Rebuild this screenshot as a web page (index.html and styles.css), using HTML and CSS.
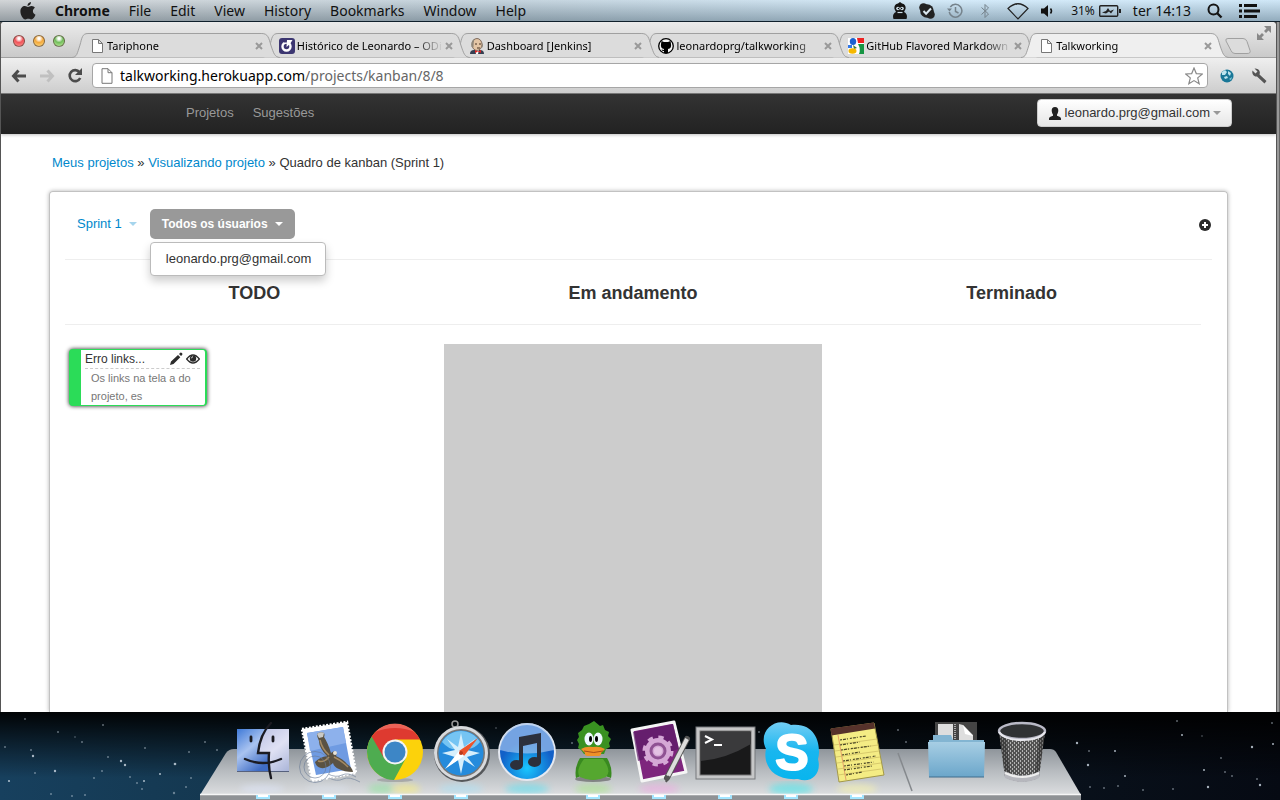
FILE: index.html
```html
<!DOCTYPE html>
<html lang="pt-BR">
<head>
<meta charset="utf-8">
<title>Talkworking</title>
<link rel="stylesheet" href="styles.css">
</head>
<body>
<header class="menubar">
  <nav class="menus">
    <button class="apple" aria-label="Apple"><svg width="16" height="18" viewBox="0 0 16 18"><path fill="#222" d="M11 0c.1 2-1.500 3.900-3.500 3.900C7.300 2 9 .2 11 0zM8 5c.8 0 1.800-1 3.600-1 1.500 0 2.600.8 3.300 1.800-2.900 1.700-2.500 5.700.6 6.900C14.700 15 13 17.500 11.300 17.500c-1.200 0-1.600-.7-3-.7s-1.900.7-3 .7C3 17.500.4 13.200.4 9.600.4 6 2.600 4.100 4.900 4.100 6.300 4.100 7.300 5 8 5z"/></svg></button>
    <button class="app">Chrome</button><button>File</button><button>Edit</button><button>View</button><button>History</button><button>Bookmarks</button><button>Window</button><button>Help</button>
  </nav>
  <div class="status">
    <svg width="14" height="18" viewBox="0 0 14 18"><path fill="#151515" d="M7 0l2 1.500c3 .5 4 3 3.500 5.500L11 10c3 1.500 3.500 4 2.500 7H.5C-.5 14 0 11.500 3 10L1.500 7C1 4.500 2 2 5 1.500z"/><circle cx="5" cy="6.500" r="1.800" fill="#cfe0ea"/><circle cx="9" cy="6.500" r="1.800" fill="#cfe0ea"/><circle cx="5.400" cy="6.500" r=".7"/><circle cx="8.600" cy="6.500" r=".7"/><path d="M4.500 10.500h5" stroke="#cfe0ea" stroke-width="1.200"/></svg>
    <svg width="16" height="16" viewBox="0 0 16 16"><g fill="#222"><circle cx="8" cy="8" r="6.800"/><circle cx="4.500" cy="4.500" r="4.300"/><circle cx="11.500" cy="11.500" r="4.300"/></g><path d="M4.500 8l2.600 2.800L12 5.500" fill="none" stroke="#dbe8f0" stroke-width="2"/></svg>
    <svg width="16" height="16" viewBox="0 0 16 16" fill="none" stroke="#75828b" stroke-width="1.500"><path d="M2.200 9A6.400 6.400 0 1 0 3.300 4"/><path d="M8.500 4v4.500l3 1.500"/><path d="M0 5.500l2.500 3 2.500-3z" fill="#75828b" stroke="none"/></svg>
    <svg width="20" height="16" viewBox="0 0 20 16" fill="none" stroke="#75828b"><path d="M6.500 4.500l7 6.500-3.500 3.500v-13L13.500 5l-7 6.500"/></svg>
    <svg width="22" height="18" viewBox="0 0 22 18" fill="none" stroke="#222" stroke-width="1.200"><path d="M1 6.500Q11-3 21 6.500L11 17z"/></svg>
    <svg width="18" height="14" viewBox="0 0 18 14"><path fill="#111" d="M0 4.500h3L7 1v12L3 9.500H0z"/><path d="M9.500 4.500q2 2.500 0 5" fill="none" stroke="#111" stroke-width="1.500"/></svg>
    <span class="battery"><span>31%</span><svg width="22" height="12" viewBox="0 0 22 12"><rect x=".7" y=".7" width="18" height="10.600" rx="1" fill="none" stroke="#222" stroke-width="1.400"/><path d="M20 4h2v4h-2z" fill="#222"/><path d="M3 7.500l4-1.500 2-3 2 3 4-1.500-3 4-2-2-3 2z" fill="#222"/></svg></span>
    <span class="clock">ter 14:13</span>
    <svg width="24" height="16" viewBox="0 0 24 16" fill="none" stroke="#151515"><circle cx="10.500" cy="6.500" r="5" stroke-width="2"/><path d="M14 10l4.500 4.500" stroke-width="2.400"/></svg>
    <svg width="21" height="14" viewBox="0 0 21 14" fill="#111"><path d="M0 0h3v3H0zM0 5.500h3v3H0zM0 11h3v3H0zM5 0h13v3H5zM5 5.500h16v3H5zM5 11h13v3H5z"/></svg>
  </div>
</header>

<main class="stage">
<section class="window">
  <div class="tabbar">
    <div class="lights"><button class="light red" aria-label="Close"></button><button class="light amber" aria-label="Minimise"></button><button class="light green" aria-label="Zoom"></button></div>
    <div class="tabs">
      <div class="tab t1"><svg class="shape" viewBox="0 0 208 25" preserveAspectRatio="none"><path d="M0 24.500C5 24 5 21 8 12C10 5 10 .5 16 .5H190C196 .5 197 5 199 12C202 21 203 24 208 24.500"/></svg><button class="title"><svg width="16" height="16" viewBox="0 0 16 16"><path d="M3.500 1.500h6l4 4v9h-10zM9.500 1.500v4h4" fill="#fff" stroke="#777"/></svg><span>Tariphone</span></button><button class="close" aria-label="Close tab"><svg width="8" height="8" viewBox="0 0 8 8"><path d="M1 1l6 6M7 1L1 7"/></svg></button></div>
      <div class="tab t2"><svg class="shape" viewBox="0 0 208 25" preserveAspectRatio="none"><path d="M0 24.500C5 24 5 21 8 12C10 5 10 .5 16 .5H190C196 .5 197 5 199 12C202 21 203 24 208 24.500"/></svg><button class="title"><svg width="16" height="16" viewBox="0 0 16 16"><rect width="16" height="16" rx="3" fill="#3c3671"/><circle cx="7.500" cy="8.500" r="4" fill="none" stroke="#fff" stroke-width="2.400"/><path d="M5 1.500h4v3H5z" fill="#3c3671"/><path d="M8 2h5.500L11 6 7.500 9z" fill="#fff"/></svg><span>Histórico de Leonardo – ODi</span></button><button class="close" aria-label="Close tab"><svg width="8" height="8" viewBox="0 0 8 8"><path d="M1 1l6 6M7 1L1 7"/></svg></button></div>
      <div class="tab t3"><svg class="shape" viewBox="0 0 208 25" preserveAspectRatio="none"><path d="M0 24.500C5 24 5 21 8 12C10 5 10 .5 16 .5H190C196 .5 197 5 199 12C202 21 203 24 208 24.500"/></svg><button class="title"><svg width="16" height="16" viewBox="0 0 16 16"><path fill="#354052" d="M1 16q0-4 4-4h6q4 0 4 4z"/><path d="M6 12h4l-1 4H7z" fill="#fff"/><ellipse cx="8" cy="6.500" rx="5" ry="6" fill="#e3c5a5" stroke="#665143" stroke-width=".8"/><path d="M2.500 9q-1-6 3-8.500-1 4-1 8.500M13 5q2 2 0 5" fill="#8f877a"/><path d="M6 6h2M10 6h2M8 10h3" stroke="#493323"/><path d="M8 13l-2-1v3l6-3v3z" fill="#d22"/></svg><span>Dashboard [Jenkins]</span></button><button class="close" aria-label="Close tab"><svg width="8" height="8" viewBox="0 0 8 8"><path d="M1 1l6 6M7 1L1 7"/></svg></button></div>
      <div class="tab t4"><svg class="shape" viewBox="0 0 208 25" preserveAspectRatio="none"><path d="M0 24.500C5 24 5 21 8 12C10 5 10 .5 16 .5H190C196 .5 197 5 199 12C202 21 203 24 208 24.500"/></svg><button class="title"><svg width="16" height="16" viewBox="0 0 16 16"><circle cx="8" cy="8" r="7.300" fill="#f4f4f4" stroke="#000" stroke-width="1.300"/><path d="M3.500 3l2.500 1h4l2.500-1 .5 3c.5 3-.5 4.500-3 5v4H6v-2c-1.500 0-2-.5-2.500-1.500L6 12v-1c-2.500-.5-3.500-2-3-5z"/></svg><span>leonardoprg/talkworking</span></button><button class="close" aria-label="Close tab"><svg width="8" height="8" viewBox="0 0 8 8"><path d="M1 1l6 6M7 1L1 7"/></svg></button></div>
      <div class="tab t5"><svg class="shape" viewBox="0 0 208 25" preserveAspectRatio="none"><path d="M0 24.500C5 24 5 21 8 12C10 5 10 .5 16 .5H190C196 .5 197 5 199 12C202 21 203 24 208 24.500"/></svg><button class="title"><svg width="16" height="16" viewBox="0 0 16 16"><rect width="16" height="16" fill="#fff"/><path d="M9 0h7v5h-6z" fill="#e22"/><path d="M10 6h6v10h-5q2-5-1-10z" fill="#169543"/><path d="M0 7h4v3H0z" fill="#3279e8"/><ellipse cx="5" cy="3.500" rx="3.200" ry="3.500" fill="#1c61cf"/><path d="M5 7l4 3-3 1z" fill="#3b7c3c"/><ellipse cx="4.500" cy="13" rx="4" ry="2.800" fill="#f5b800"/></svg><span>GitHub Flavored Markdown</span></button><button class="close" aria-label="Close tab"><svg width="8" height="8" viewBox="0 0 8 8"><path d="M1 1l6 6M7 1L1 7"/></svg></button></div>
      <div class="tab active"><svg class="shape" viewBox="0 0 208 25" preserveAspectRatio="none"><path d="M0 24.500C5 24 5 21 8 12C10 5 10 .5 16 .5H190C196 .5 197 5 199 12C202 21 203 24 208 24.500"/></svg><button class="title"><svg width="16" height="16" viewBox="0 0 16 16"><path d="M3.500 1.500h6l4 4v9h-10zM9.500 1.500v4h4" fill="#fff" stroke="#777"/></svg><span>Talkworking</span></button><button class="close" aria-label="Close tab"><svg width="8" height="8" viewBox="0 0 8 8"><path d="M1 1l6 6M7 1L1 7"/></svg></button></div>
    </div>
    <button class="newtab" aria-label="New tab"><svg width="26" height="16" viewBox="0 0 26 16"><path d="M3 .5h15q3 0 4 3l3 9q1 3-3 3H10q-3 0-4-3L1 3Q0 .5 3 .5z" fill="#dcdcdc" stroke="#a0a0a0"/></svg></button>
    <button class="expand" aria-label="Full screen"><svg width="14" height="14" viewBox="0 0 14 14" fill="#888"><path d="M7 0h7v7l-2.500-2.500L9 7 7 5l2.500-2.500zM0 7l2.500 2.500L5 7l2 2-2.500 2.500L7 14H0z"/></svg></button>
  </div>
  <div class="toolbar">
    <button aria-label="Back"><svg width="16" height="14" viewBox="0 0 16 14"><path d="M7.500 1.500L2.500 7l5 5.500M3 7h12" fill="none" stroke="#4c4c4c" stroke-width="3"/></svg></button>
    <button aria-label="Forward"><svg width="16" height="14" viewBox="0 0 16 14"><path d="M8.500 1.500l5 5.500-5 5.500M13 7H1" fill="none" stroke="#c0c0c0" stroke-width="3"/></svg></button>
    <button aria-label="Reload"><svg width="16" height="16" viewBox="0 0 16 16"><path d="M12.500 4.200A5.500 5.500 0 1 0 13.200 10" fill="none" stroke="#4c4c4c" stroke-width="2.600"/><path d="M15 0v7H8z" fill="#4c4c4c"/></svg></button>
    <div class="omnibox">
      <svg width="12" height="16" viewBox="0 0 12 16"><path d="M1 .7h6l4 4v10.600H1zM7 .7v4h4" fill="#fff" stroke="#777"/></svg>
      <label class="url"><b>talkworking.herokuapp.com</b><span>/projects/kanban/8/8</span><input type="text" aria-label="Address"></label>
      <button aria-label="Bookmark"><svg width="18" height="18" viewBox="0 0 18 18"><path d="M9 1l2.300 5.600 6 .4-4.600 3.900 1.500 5.900L9 13.600l-5.200 3.200 1.500-5.900L.7 7l6-.4z" fill="#fff" stroke="#8a8a8a" stroke-width="1.200"/></svg></button>
    </div>
    <button aria-label="Extension"><svg width="14" height="14" viewBox="0 0 14 14"><circle cx="7" cy="7" r="6.500" fill="#197797"/><path d="M2 3l3-2 2 2-2 3-3 0zM8 2l3 2-1 3-2-2zM4 8l3-1 1 2-3 1z" fill="#bde5ee"/><path d="M9 10l3-2-1 3z" fill="#7fc6d6"/></svg></button>
    <button aria-label="Settings"><svg width="16" height="16" viewBox="0 0 16 16"><path d="M1.500 2.500l3 3 2-2-3-3C7 0 10 3 8.500 6.500l7 6.500-2 2.500-7.500-7C3 9 .5 6 1.500 2.500z" fill="#555"/></svg></button>
  </div>

  <div class="page">
    <div class="navbar">
      <nav><a href="#">Projetos</a><a href="#">Sugestões</a></nav>
      <button class="account"><svg width="14" height="13" viewBox="0 0 14 13"><path fill="#222" d="M7 0c2.300 0 3.400 1.500 3.300 3.800C10.200 5.500 9.500 7 9 7.500v1.200c1.500.8 4 1 4 2.800V13H1v-1.500C1 9.700 3.500 9.500 5 8.700V7.500C4.500 7 3.800 5.500 3.700 3.800 3.600 1.500 4.700 0 7 0z"/></svg><span>leonardo.prg@gmail.com</span><i class="caret"></i></button>
    </div>
    <div class="container">
      <nav class="crumbs"><a href="#">Meus projetos</a> » <a href="#">Visualizando projeto</a> » Quadro de kanban (Sprint 1)</nav>
      <section class="panel">
        <div class="filters">
          <button class="sprint">Sprint 1<i class="caret"></i></button>
          <div class="dropdown">
            <button class="users">Todos os úsuarios<i class="caret"></i></button>
            <div class="menu"><a href="#">leonardo.prg@gmail.com</a></div>
          </div>
          <button class="add" aria-label="Adicionar"><svg width="12" height="12" viewBox="0 0 12 12"><circle cx="6" cy="6" r="6" fill="#2b2b2b"/><path d="M6 3v6M3 6h6" stroke="#fff" stroke-width="2"/></svg></button>
        </div>
        <div class="board">
          <div class="heads"><h3>TODO</h3><h3>Em andamento</h3><h3>Terminado</h3></div>
          <div class="columns">
            <div class="column">
              <article class="card">
                <header><h4>Erro links...</h4>
                  <button aria-label="Editar"><svg width="14" height="14" viewBox="0 0 14 14"><path d="M1 13l1-3.500L9 3l2.300 2.300L4.500 12zM10 2l1.300-1.300q.8-.4 1.600.4t.4 1.600L12 4z" fill="#2b2b2b"/></svg></button>
                  <button aria-label="Ver"><svg width="14" height="10" viewBox="0 0 14 10"><path d="M.7 5Q7-3 13.300 5 7 13 .7 5z" fill="#fff" stroke="#2b2b2b" stroke-width="1.400"/><circle cx="7" cy="4.600" r="3.200" fill="#2b2b2b"/><path d="M5.400 4.300q.3-1.500 1.600-1.600" fill="none" stroke="#fff" stroke-width=".8"/></svg></button>
                </header>
                <p>Os links na tela a do projeto, es</p>
              </article>
            </div>
            <div class="column over"></div>
            <div class="column"></div>
          </div>
        </div>
      </section>
    </div>
  </div>
</section>
</main>

<footer class="desktop">
  <svg class="stars" width="1280" height="88" viewBox="0 0 1280 88" fill="#cfdbe6"><g opacity=".8"><circle cx="1077" cy="31" r="1.200"/><circle cx="1088" cy="53" r="1.200"/><circle cx="1115" cy="39" r="1"/><circle cx="1125" cy="64" r="1"/><circle cx="1182" cy="23" r="1"/><circle cx="1204" cy="58" r="1"/><circle cx="1208" cy="75" r="1.200"/><circle cx="1252" cy="35" r="1.200"/><circle cx="1260" cy="73" r="1.200"/><circle cx="1273" cy="32" r="1"/><circle cx="175" cy="52" r="1.300"/><circle cx="121" cy="49" r="1.200"/><circle cx="125" cy="53" r="1.200"/><circle cx="33" cy="44" r="1.200"/><circle cx="55" cy="59" r="1.200"/><circle cx="9" cy="69" r="1.100"/><circle cx="144" cy="69" r="1"/><circle cx="160" cy="62" r="1"/></g><g opacity=".45"><circle cx="1089" cy="39" r="1"/><circle cx="1104" cy="76" r="1"/><circle cx="1143" cy="78" r="1"/><circle cx="1173" cy="77" r="1"/><circle cx="1177" cy="9" r="1"/><circle cx="1202" cy="24" r=".8"/><circle cx="1221" cy="46" r="1"/><circle cx="1225" cy="60" r="1"/><circle cx="1232" cy="64" r="1"/><circle cx="1257" cy="67" r="1"/><circle cx="1272" cy="11" r="1"/><circle cx="1090" cy="75" r="1"/><circle cx="1118" cy="74" r="1"/><circle cx="31" cy="38" r="1"/><circle cx="25" cy="7" r="1"/><circle cx="58" cy="20" r="1"/><circle cx="82" cy="30" r="1"/><circle cx="75" cy="25" r=".8"/><circle cx="103" cy="13" r="1"/><circle cx="145" cy="36" r="1"/><circle cx="108" cy="45" r="1"/><circle cx="102" cy="59" r="1"/><circle cx="94" cy="66" r="1"/><circle cx="35" cy="61" r="1"/><circle cx="51" cy="82" r="1"/><circle cx="85" cy="83" r="1"/><circle cx="72" cy="84" r="1"/><circle cx="142" cy="77" r="1"/><circle cx="174" cy="81" r="1.200"/><circle cx="186" cy="75" r="1"/><circle cx="191" cy="66" r="1"/><circle cx="5" cy="35" r="1"/><circle cx="130" cy="65" r="1"/><circle cx="137" cy="71" r="1"/><circle cx="189" cy="40" r="1"/><circle cx="205" cy="30" r="1"/><circle cx="217" cy="38" r="1"/><circle cx="572" cy="31" r="1"/><circle cx="759" cy="20" r="1"/><circle cx="898" cy="18" r="1"/><circle cx="906" cy="30" r="1"/><circle cx="496" cy="16" r=".8"/></g></svg>
  <nav class="dock">
    <svg class="shelf" width="882" height="52" viewBox="0 0 882 52">
      <defs><linearGradient id="sh" x2="0" y2="1"><stop offset="0" stop-color="#8f959b"/><stop offset=".5" stop-color="#b9bdc1"/><stop offset="1" stop-color="#dcdee0"/></linearGradient><filter id="bl"><feGaussianBlur stdDeviation="3"/></filter></defs>
      <path d="M34 1H850q4 0 6 3L881 47H0L26 5q3-4 8-4z" fill="url(#sh)"/>
      <g filter="url(#bl)" opacity=".5"><ellipse cx="62" cy="41" rx="22" ry="4" fill="#dfe8ff"/><ellipse cx="128" cy="41" rx="22" ry="4" fill="#dbe3ef"/><ellipse cx="182" cy="41" rx="14" ry="5" fill="#83e693"/><ellipse cx="206" cy="41" rx="14" ry="5" fill="#fff36c"/><ellipse cx="261" cy="41" rx="22" ry="5" fill="#a4e2fa"/><ellipse cx="327" cy="41" rx="22" ry="5" fill="#47e1f5"/><ellipse cx="393" cy="41" rx="18" ry="5" fill="#a0ea7a"/><ellipse cx="459" cy="41" rx="20" ry="5" fill="#f4a0e4"/><ellipse cx="591" cy="41" rx="22" ry="6" fill="#30eaf0"/><ellipse cx="657" cy="41" rx="20" ry="5" fill="#fff9a0"/></g>
      <path d="M0 47h881v5H0z" fill="#8f9295"/><path d="M0 46.500h881" stroke="#f6f6f6" stroke-width="1.500"/>
      <g stroke="#a2e5ff" stroke-width="4"><path d="M56 49h14M122 49h14M188 49h14M254 49h14M386 49h14M452 49h14M518 49h14M584 49h14M650 49h14"/></g><g stroke="#fff" stroke-width="2"><path d="M58 48h10M124 48h10M190 48h10M256 48h10M388 48h10M454 48h10M520 48h10M586 48h10M652 48h10"/></g>
    </svg>
    <button aria-label="Finder"><svg width="66" height="88" viewBox="0 0 66 88"><defs><linearGradient id="f1" x2=".6" y2="1"><stop stop-color="#3f7ad8"/><stop offset=".5" stop-color="#a9c3f0"/><stop offset="1" stop-color="#3f6cc4"/></linearGradient><linearGradient id="f2" x2="1" y2="1"><stop stop-color="#a9b2dc"/><stop offset=".6" stop-color="#dfe1f4"/><stop offset="1" stop-color="#a9b4d8"/></linearGradient></defs><rect x="7" y="17" width="52" height="43" fill="url(#f2)"/><path d="M7 17h31q-8 10-10 24h11q-1 10 0 19H7z" fill="url(#f1)"/><path d="M7 59.500h52" stroke="#56617d"/><g fill="none" stroke="#1b1b22" stroke-width="2.400" stroke-linecap="round"><path d="M41 11Q30 22 28 41h11q-1 14 2 25M15 47q18 8 36 0"/><path d="M21 25v4M43 25v4" stroke-width="2.800"/></g></svg></button>
    <button aria-label="Mail"><svg width="66" height="88" viewBox="0 0 66 88"><path d="M6 17l45-7 9 51-44 8z" fill="#fff" stroke="#fff" stroke-width="2.500" stroke-dasharray="2 1.500"/><path d="M11 21l36-6 8 42-35 6z" fill="#6f9be2"/><path d="M11 21l36-6 3 16-36 8z" fill="#8db1ec"/><path d="M21 22q3-3 7-1 1 2 0 4 4 6 7 16l3-2 3 2-1 3q7 3 11 8 5 3 6 8-9 0-14-3-5-2-6-6-6 6-12 5-5-1-6-6 5-5 12-6-8-8-8-15-2-4-2-7z" fill="#5a5243"/><path d="M24 28q2 9 9 15M38 45q8 4 14 10M22 49q6 2 11-4" stroke="#a58a62" stroke-width="1.500" fill="none"/><path d="M21 22q3-3 7-1l-1 4-4 1z" fill="#c9c9c6"/><circle cx="39" cy="41" r="2" fill="#e8e4da"/><g fill="none" stroke="#6a7b96" opacity=".6"><circle cx="19" cy="55" r="15.500"/><circle cx="19" cy="55" r="11"/><path d="M32 62q8 4 14 1t14 2M33 66q8 4 14 1t17 3"/></g></svg></button>
    <button aria-label="Chrome"><svg width="66" height="88" viewBox="0 0 66 88"><ellipse cx="33" cy="68" rx="18" ry="2" fill="#777" opacity=".4"/><circle cx="33" cy="40" r="28" fill="#fcd20b"/><path d="M9.700 24.500A28 28 0 0 0 32 68L44 46z" fill="#4eac50"/><path d="M33 27.500h25A28 28 0 0 0 9.700 24.500L22 46z" fill="#de3a30"/><path d="M13 20a28 28 0 0 1 40 0q-20-8-40 0z" fill="#f2746a" opacity=".7"/><circle cx="33" cy="40" r="12.500" fill="#f5f5f5"/><circle cx="33" cy="40" r="10.500" fill="#3d86c6"/></svg></button>
    <button aria-label="Safari"><svg width="66" height="88" viewBox="0 0 66 88"><circle cx="27" cy="12" r="3" fill="none" stroke="#999" stroke-width="1.500"/><circle cx="34" cy="42" r="28" fill="#55585b"/><circle cx="33" cy="41" r="27" fill="#d8dadd"/><circle cx="33" cy="41" r="24" fill="#777"/><circle cx="33" cy="41" r="22.500" fill="#258bdc"/><path d="M14 30a22 22 0 0 1 38 0q-8 10-17 5-10 7-21-5z" fill="#75c4f3"/><path d="M33 21l3 14 11-8-8 11 13 3-13 4 8 10-11-7-3 14-3-14-11 7 8-10-13-4 13-3-8-11 11 8z" fill="#d6effc"/><path d="M50 26L36 44l-5-5z" fill="#ec542b"/><path d="M17 57l14-18 5 5z" fill="#fff"/><circle cx="33" cy="41" r="2" fill="#bb381a"/></svg></button>
    <button aria-label="iTunes"><svg width="66" height="88" viewBox="0 0 66 88"><defs><radialGradient id="it" cy=".8"><stop stop-color="#19c7ff"/><stop offset="1" stop-color="#1260c8"/></radialGradient></defs><circle cx="33" cy="40" r="29" fill="#e5e9f1"/><circle cx="33" cy="40" r="27" fill="url(#it)"/><path d="M6 38a27 27 0 0 1 54 0q-27 7-54 0z" fill="#a9c8ef" opacity=".65"/><g fill="#2c303c"><path d="M25 25l22-4v29h-4V31l-14 3v19h-4z"/><ellipse cx="22.500" cy="53" rx="6.500" ry="5"/><ellipse cx="40.500" cy="50" rx="6.500" ry="5"/></g></svg></button>
    <button aria-label="Adium"><svg width="66" height="88" viewBox="0 0 66 88"><ellipse cx="33" cy="67" rx="18" ry="3" fill="#555" opacity=".6"/><path d="M20 46q-6 10-4 20l5-2q12 7 24 0l6 2q2-10-4-20z" fill="#398a20"/><path d="M24 47h19q9 12 3 18-13 6-26 0-5-6 4-18z" fill="#55a72f"/><path d="M34 9l6 5 3-1 2 5 4 2-1 4 3 3-2 4 1 4-4 2-2 5H24l-3-4-3-2 1-4-2-4 2-3-1-4 4-3 2-4 5-2z" fill="#399121"/><ellipse cx="29" cy="27" rx="4.500" ry="6.500" fill="#eef8ff"/><ellipse cx="38" cy="27" rx="4.500" ry="6.500" fill="#eef8ff"/><ellipse cx="30.500" cy="27" rx="1.500" ry="3"/><ellipse cx="36.500" cy="27" rx="1.500" ry="3"/><path d="M21 37q5-3 12-2 7-1 12 2l-4 4q1 2-2 3H27q-3-1-2-3z" fill="#ef9127"/><path d="M24 39q10 3 19 0" stroke="#a74d15" fill="none"/></svg></button>
    <button aria-label="IDE"><svg width="66" height="88" viewBox="0 0 66 88"><path d="M6 18l42-8 12 50-44 9z" fill="#7e257d" stroke="#f5f5f5" stroke-width="3" stroke-linejoin="round"/><path d="M7 20l40-8 6 25-41 12z" fill="#5b1b67" opacity=".7"/><circle cx="32" cy="39" r="13" fill="#d5a8d6" stroke="#d5a8d6" stroke-width="5" stroke-dasharray="5 5.200"/><circle cx="32" cy="39" r="7" fill="none" stroke="#8f5293" stroke-width="3"/><circle cx="32" cy="39" r="4" fill="#e3c2e3"/><path d="M61 27L41 66" stroke="#555" stroke-width="6" stroke-linecap="round"/><path d="M61 27L42 64" stroke="#ddd" stroke-width="4"/><path d="M43 64l-3 6" stroke="#555" stroke-width="2"/></svg></button>
    <button aria-label="Terminal"><svg width="66" height="88" viewBox="0 0 66 88"><rect x="4" y="15" width="59" height="52" fill="#c6c7c8" stroke="#77797c"/><rect x="8" y="19" width="51" height="44" fill="#19191a" stroke="#777"/><path d="M9 49q25-2 50-17V20H9z" fill="#3a3a3c"/><path d="M13 24l7 3.500-7 3.500M22 33h8" fill="none" stroke="#fff" stroke-width="2"/></svg></button>
    <button aria-label="Skype"><svg width="66" height="88" viewBox="0 0 66 88"><defs><linearGradient id="sk" x2="0" y2="1"><stop stop-color="#72cdf4"/><stop offset=".5" stop-color="#18b6ef"/><stop offset="1" stop-color="#08b5ee"/></linearGradient></defs><path d="M33 13C61 10 63 38 60 47c4 15-7 25-20 20C12 69 5 50 8 37-1 19 18 4 33 13z" fill="url(#sk)"/><text x="34" y="58" text-anchor="middle" class="skype-mark">S</text></svg></button>
    <button aria-label="Stickies"><svg width="66" height="88" viewBox="0 0 66 88"><path d="M7 17l43-6 10 52-45 7z" fill="#f4ec84" stroke="#a29848"/><path d="M6.500 16.500L50 10.500l1 6-43.500 7z" fill="#56322b"/><g stroke="#d8ca6c"><path d="M10 33l43-6M11 39l43-6M12 45l43-6M13 51l43-6M14 57l43-6M14 63l43-6"/></g><path d="M14 23l8 45" stroke="#e3a267"/><g stroke="#4c4827" stroke-dasharray="2 1 3 1 1 2" stroke-width="1.200"><path d="M16 28l26-4M16 33l20-3M17 38l30-4M18 43l18-3M19 49l33-5M20 54l30-4M20 58l28-4M22 63l16-3"/></g></svg></button>
    <svg class="separator" width="33" height="88" viewBox="0 0 33 88"><path d="M8 41l14 38" stroke="#85898d" stroke-width="1.500"/></svg>
    <button aria-label="Downloads"><svg width="66" height="88" viewBox="0 0 66 88"><defs><linearGradient id="fo" x2="0" y2="1"><stop stop-color="#a7cee4"/><stop offset="1" stop-color="#6ba6ca"/></linearGradient></defs><rect x="12" y="10" width="42" height="25" fill="#444"/><path d="M15 12h15v20H15zM36 12l4 1 10 10v6H36z" fill="#dedede"/><path d="M32 12v18" stroke="#aaa" stroke-width="2" stroke-dasharray="1 1"/><path d="M40 13l10 11-8-2z" fill="#fff"/><path d="M10 28v-5h18l2 5h31v10H6V28z" fill="#83b5d2"/><path d="M5 30h57l-1 35H6z" fill="url(#fo)"/><path d="M6 65h55" stroke="#416f8e"/></svg></button>
    <button aria-label="Trash"><svg width="66" height="88" viewBox="0 0 66 88"><defs><pattern id="mesh" width="4" height="4" patternUnits="userSpaceOnUse"><rect width="4" height="4" fill="#b4b4b4"/><path d="M0 1h3M2 3h3M-1 3h2" stroke="#333" stroke-width="1.700"/></pattern></defs><path d="M10 20l6 45q17 9 34 0l6-45z" fill="url(#mesh)"/><path d="M10 20l6 45 6 3-5-43zM56 20l-6 45-5 3 5-43z" fill="#222" opacity=".4"/><path d="M15 59q18 9 36 0l-1 7q-17 8-34 0z" fill="#b6b7bd"/><path d="M16 61q17 8 34 0" stroke="#eee" stroke-width="2" fill="none"/><ellipse cx="33" cy="19" rx="23" ry="8" fill="#303234" stroke="#b9b9c6" stroke-width="2.500"/><path d="M10 20q5 8 23 8t23-8" stroke="#e8e8ee" stroke-width="2" fill="none"/></svg></button>
  </nav>
</footer>
</body>
</html>
```

FILE: styles.css
```css
* { box-sizing: border-box; }
html, body { height: 100%; margin: 0; }
body { display: flex; flex-direction: column; overflow: hidden; background: #05080c; font: 13px/20px "Helvetica Neue", "Liberation Sans", Arial, sans-serif; color: #333; }
button { margin: 0; padding: 0; border: 0; background: none; font: inherit; color: inherit; display: flex; align-items: center; white-space: nowrap; }
svg { display: block; flex: none; }
a { color: #08c; text-decoration: none; }

.menubar { flex: none; height: 22px; display: flex; justify-content: space-between; align-items: center; padding: 0 20px; border-bottom: 1px solid #10202c; font: 14px/20px "Noto Sans", sans-serif; color: #111; background: linear-gradient(rgba(255,255,255,.25), rgba(60,75,85,.35)), linear-gradient(90deg, #c4c8cb, #b2c6d3 40%, #c6e4f8 75%, #c0dff4); }
.menus, .status { display: flex; align-items: center; }
.menus { gap: 19px; }
.status { gap: 12px; }
.app { font-weight: bold; }
.battery { display: flex; align-items: center; gap: 4px; font-size: 12px; }

.stage { flex: 1; min-height: 0; display: flex; padding-right: 4px; background: linear-gradient(90deg, #555 1px, #999 1px 3px, #666 3px) right / 4px 100% no-repeat #555; }
.window { flex: 1; min-width: 0; display: flex; flex-direction: column; border-left: 1px solid #555; border-radius: 4px 4px 0 0; overflow: hidden; background: #fff; }
.tabbar { flex: none; height: 36px; display: flex; align-items: flex-end; position: relative; background: linear-gradient(#ebebeb, #c9c9c9); box-shadow: inset 0 -1px #a0a0a0; }
.lights { display: flex; gap: 8px; padding: 0 7px 11px 12px; }
.light { width: 12px; height: 12px; border-radius: 50%; border: 1px solid rgba(70,50,40,.6); }
.red { background: radial-gradient(circle at 50% 25%, #fff 0 10%, #f0545a 45%, #ff9a94); }
.amber { background: radial-gradient(circle at 50% 25%, #fff 0 10%, #f3a83c 45%, #ffe28a); }
.green { background: radial-gradient(circle at 50% 25%, #fff 0 10%, #72bd5c 45%, #c6f5a4); }
.tabs { flex: 1; display: flex; min-width: 0; padding-right: 18px; }
.tab { flex: 1 1 0; min-width: 0; height: 25px; margin-right: -18px; padding: 0 15px 0 17px; display: flex; align-items: center; position: relative; }
.shape { position: absolute; inset: 0; width: 100%; height: 100%; z-index: -1; fill: #dcdcdc; stroke: #a0a0a0; }
.t1 { z-index: 5; } .t2 { z-index: 4; } .t3 { z-index: 3; } .t4 { z-index: 2; } .t5 { z-index: 1; }
.active { z-index: 6; }
.active .shape { fill: #efefef; }
.title { flex: 1; min-width: 0; gap: 2px; overflow: hidden; font: 11px/16px "Noto Sans", sans-serif; color: #000; -webkit-mask: linear-gradient(90deg, #000 calc(100% - 28px), transparent); mask: linear-gradient(90deg, #000 calc(100% - 28px), transparent); }
.close { padding: 0 0 0 2px; width: 12px; }
.close svg { stroke: #999; stroke-width: 2; }
.newtab { padding: 0 0 4px; margin-left: -4px; }
.expand { align-self: flex-start; padding: 4px 5px 0 0; margin-left: 6px; }
.toolbar { flex: none; height: 36px; display: flex; align-items: center; gap: 12px; padding: 0 9px 0 10px; background: linear-gradient(#efefef, #cdcdcd); border-bottom: 1px solid #777; }
.toolbar > button:nth-last-child(2) { margin-right: 5px; }
.omnibox { flex: 1; display: flex; align-items: center; height: 25px; margin-left: -3px; padding: 0 4px 0 8px; gap: 7px; background: #fff; border: 1px solid #a6a6a6; border-radius: 4px; }
.url { flex: 1; display: flex; font: 14px/20px "Noto Sans", sans-serif; color: #666; }
.url b { font-weight: normal; color: #000; }
.url input { flex: 1; min-width: 0; border: 0; padding: 0; outline: 0; background: none; font: inherit; }

.page { flex: 1; min-height: 0; display: flex; flex-direction: column; overflow: hidden; }
.navbar { flex: none; height: 40px; display: flex; align-items: center; justify-content: space-between; padding: 0 44px 2px 185px; background: linear-gradient(#333, #222); box-shadow: 0 1px 3px rgba(0,0,0,.25); }
.navbar nav { display: flex; gap: 19px; }
.navbar a { color: #999; }
.caret { width: 0; height: 0; border: 4px solid transparent; border-bottom: 0; border-top-color: currentColor; }
.account { height: 28px; padding: 0 10px; gap: 3px; border: 1px solid #ccc; border-radius: 4px; background: linear-gradient(#fff, #e6e6e6); }
.account .caret { border-top-color: #999; }
.container { flex: 1; min-height: 0; display: flex; flex-direction: column; margin: 0 48px; }
.crumbs { padding: 19px 3px 18px; }
.panel { flex: 1; min-height: 0; display: flex; flex-direction: column; border: 1px solid #c2c2c2; border-bottom: 0; border-radius: 4px 4px 0 0; padding: 17px 15px 0; box-shadow: 0 0 4px rgba(0,0,0,.3); }
.filters { flex: none; display: flex; align-items: center; padding-bottom: 20px; border-bottom: 1px solid #eee; }
.filters button { height: 30px; gap: 7px; }
.sprint { padding: 0 13px 0 12px; color: #08c; }
.sprint .caret { opacity: .35; }
.dropdown { position: relative; }
.filters .users { padding: 0 12px; border-radius: 5px; background: #999; color: #fff; font-size: 12px; font-weight: bold; }
.menu { position: absolute; top: 100%; left: 0; margin-top: 3px; padding: 6px 14px 6px 15px; border: 1px solid #bbb; border-radius: 4px; background: #fff; box-shadow: 0 5px 10px rgba(0,0,0,.2); white-space: nowrap; z-index: 2; }
.menu a { color: #333; }
.add { margin-left: auto; padding: 2px 1px 0 0; }
.board { flex: 1; min-height: 0; display: flex; flex-direction: column; margin-right: 11px; }
.heads, .columns { display: grid; grid-template-columns: repeat(3, 1fr); }
.heads { flex: none; padding: 18px 0 16px; border-bottom: 1px solid #eee; margin-bottom: 19px; }
h3 { margin: 0; text-align: center; font-size: 18px; line-height: 30px; }
.columns { flex: 1; min-height: 0; }
.column { padding: 5px 4px; }
.over { background: #ccc; }
.card { width: 138px; border: 1px solid #2bdc58; border-left-width: 12px; border-right-width: 2px; border-radius: 4px; box-shadow: 0 0 4px #222; background: #fff; }
.card header { display: flex; align-items: center; gap: 3px; margin: 0 5px 0 4px; border-bottom: 1px dashed #ccc; }
.card h4 { flex: 1; margin: 0; font-size: 12px; line-height: 18px; font-weight: normal; }
.card p { margin: 0; padding: 0 4px 0 10px; font-size: 11px; line-height: 18px; color: #777; }

.desktop { flex: none; height: 88px; position: relative; display: flex; justify-content: center; overflow: hidden; background: linear-gradient(rgba(0,0,0,.95), transparent 75%), linear-gradient(90deg, #17405e, #14374f 18%, #0c1a26 60%, #060a13); }
.stars { position: absolute; top: 0; left: 0; }
.dock { display: flex; position: relative; padding-left: 5px; }
.shelf { position: absolute; bottom: 0; left: 50%; margin-left: -440px; }
.dock button, .separator { position: relative; }
.skype-mark { font: bold 50px "Liberation Sans", Arial, sans-serif; fill: #fff; stroke: #fff; stroke-width: 2; stroke-linejoin: round; }
```
